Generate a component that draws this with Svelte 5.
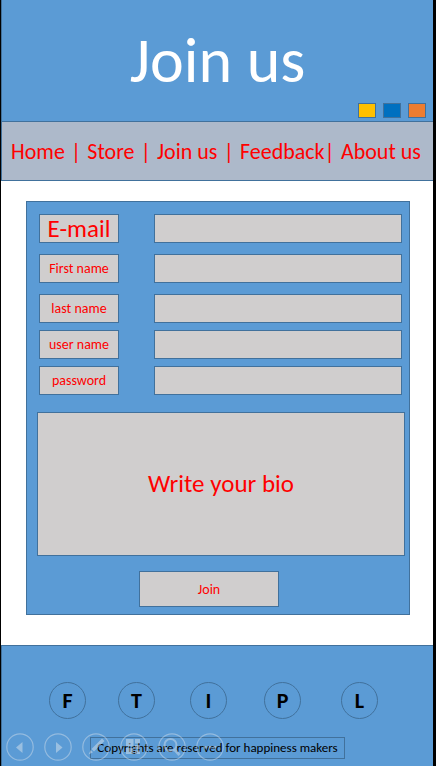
<script>
  const swatches = [
    { name: 'Yellow theme', color: '#ffc000' },
    { name: 'Blue theme', color: '#0070c0' },
    { name: 'Orange theme', color: '#ed7d31' }
  ];
  const links = ['Home', 'Store', 'Join us'];
  const fields = [
    { id: 'email', label: 'E-mail', type: 'email' },
    { id: 'first', label: 'First name', type: 'text' },
    { id: 'last', label: 'last name', type: 'text' },
    { id: 'user', label: 'user name', type: 'text' },
    { id: 'pass', label: 'password', type: 'password' }
  ];
  const socials = ['F', 'T', 'I', 'P', 'L'];
</script>

<div class="page">
  <header>
    <h1>Join us</h1>
    <div class="swatches">
      {#each swatches as s}
        <button type="button" aria-label={s.name} style:background={s.color}></button>
      {/each}
    </div>
  </header>

  <nav>
    {#each links as link}
      <a href="#top">{link}</a>
      <span>|</span>
    {/each}
    <span><a href="#top">Feedback</a>|</span>
    <a href="#top">About us</a>
  </nav>

  <main>
    <form onsubmit={(e) => e.preventDefault()}>
      <div class="fields">
        {#each fields as f}
          <div class="row">
            <label for={f.id} class:big={f.id === 'email'}>{f.label}</label>
            <input id={f.id} type={f.type} />
          </div>
        {/each}
      </div>
      <textarea aria-label="Write your bio" placeholder="Write your bio"></textarea>
      <button class="join" type="submit">Join</button>
    </form>
  </main>

  <footer>
    <div class="socials">
      {#each socials as s}
        <a href="#top">{s}</a>
      {/each}
    </div>
    <p>Copyrights are reserved for happiness makers</p>
    <div class="controls">
      <button type="button" aria-label="Previous">
        <svg viewBox="0 0 28 28"><circle cx="14" cy="14" r="13.2" /><path class="fill" d="M16.500 9v11L10 14.500z" /></svg>
      </button>
      <button type="button" aria-label="Next">
        <svg viewBox="0 0 28 28"><circle cx="14" cy="14" r="13.2" /><path class="fill" d="M12 9v11l6.500-5.500z" /></svg>
      </button>
      <button type="button" aria-label="Pen">
        <svg viewBox="0 0 28 28"><circle cx="14" cy="14" r="13.2" /><path class="fill" d="M20 5.500l2.500 2.500L12 18.500 9.500 16zM8.700 17l2.300 2.300L6.500 21.500z" /></svg>
      </button>
      <button type="button" aria-label="All slides">
        <svg viewBox="0 0 28 28"><circle cx="14" cy="14" r="13.2" /><path class="fill" d="M6 6h7.500v7.500H6zM15 6h5v4.500h-5zM15 12h5v4h-5zM6 15h7.500v6H6zM15 17.500h5V21h-5z" /></svg>
      </button>
      <button type="button" aria-label="Zoom">
        <svg viewBox="0 0 28 28"><circle cx="14" cy="14" r="13.2" /><circle class="lens" cx="12.500" cy="12" r="6" /><path class="handle" d="M16.500 16.500l5 5.500" /></svg>
      </button>
      <button type="button" aria-label="More">
        <svg viewBox="0 0 28 28"><circle cx="14" cy="14" r="13.2" /><path class="fill" d="M8 13h2.500v2.500H8zM12.800 13h2.500v2.500h-2.500zM17.500 13H20v2.500h-2.500z" /></svg>
      </button>
    </div>
  </footer>
</div>

<style>
  :global(body) {
    margin: 0;
    background: #fff;
  }
  .page {
    --edge: #41719c;
    --blue: #5b9bd5;
    --grey: #d0cece;
    box-sizing: border-box;
    display: flex;
    flex-direction: column;
    min-height: 100vh;
    border-left: 1px solid #000;
    border-right: 3px solid #000;
    font-family: Carlito, Lato, sans-serif;
    color: #f00;
  }
  .page * {
    box-sizing: border-box;
  }
  a {
    color: inherit;
    text-decoration: none;
  }
  button,
  input,
  textarea {
    margin: 0;
    padding: 0;
    font: inherit;
    color: inherit;
    border: 1px solid var(--edge);
    border-radius: 0;
    background: var(--grey);
  }
  header {
    display: flex;
    flex-direction: column;
    padding: 26px 7px 3px;
    border-left: 1px solid var(--edge);
    border-bottom: 1px solid var(--edge);
    background: var(--blue);
  }
  h1 {
    margin: 0;
    color: #fff;
    font-size: 64px;
    line-height: 68px;
    font-weight: 400;
    text-align: center;
  }
  .swatches {
    display: flex;
    justify-content: flex-end;
    gap: 7px;
    padding-top: 9px;
  }
  .swatches button {
    width: 18px;
    height: 15px;
  }
  nav {
    display: flex;
    align-items: center;
    justify-content: space-between;
    height: 59px;
    padding: 0 12px 0 9px;
    border-left: 1px solid var(--edge);
    border-bottom: 1px solid var(--edge);
    background: #adb9ca;
    font-size: 22px;
    white-space: nowrap;
  }
  main {
    padding: 20px 23px 30px 25px;
    background: #fff;
  }
  form {
    display: flex;
    flex-direction: column;
    padding: 12px 4px 7px 10px;
    border: 1px solid var(--edge);
    background: var(--blue);
  }
  .fields {
    display: flex;
    flex-direction: column;
    padding: 0 3px 0 2px;
  }
  .row {
    display: flex;
    gap: 35px;
    height: 29px;
    margin-bottom: 11px;
  }
  .row:nth-child(n + 3) {
    margin-bottom: 7px;
  }
  label {
    display: flex;
    align-items: center;
    justify-content: center;
    width: 80px;
    border: 1px solid var(--edge);
    background: var(--grey);
    font-size: 14px;
    white-space: nowrap;
  }
  .big {
    font-size: 25px;
  }
  input {
    flex: 1;
    min-width: 0;
    padding: 0 6px;
    font-size: 14px;
  }
  textarea {
    height: 144px;
    margin-top: 10px;
    padding: 56px 8px 0;
    resize: none;
    font-size: 25px;
    line-height: 30px;
    text-align: center;
  }
  textarea::placeholder {
    color: #f00;
    opacity: 1;
  }
  .join {
    align-self: center;
    width: 140px;
    height: 36px;
    margin: 15px 24px 0 0;
    font-size: 14px;
  }
  footer {
    position: relative;
    flex: 1;
    display: flex;
    flex-direction: column;
    align-items: center;
    padding: 36px 0 7px;
    border-top: 1px solid var(--edge);
    border-left: 1px solid var(--edge);
    background: var(--blue);
    color: #000;
  }
  .socials {
    display: grid;
    grid-template-columns: 69fr 72fr 74fr 77fr 37px;
    align-self: stretch;
    padding: 0 55px 0 47px;
  }
  .socials a {
    display: flex;
    align-items: center;
    justify-content: center;
    width: 37px;
    height: 37px;
    border: 1px solid var(--edge);
    border-radius: 50%;
    font-size: 22px;
    font-weight: 700;
  }
  p {
    margin: 18px 0 0;
    padding: 0 6px;
    border: 1px solid var(--edge);
    font-size: 13px;
    line-height: 20px;
    white-space: nowrap;
  }
  .controls {
    position: absolute;
    left: 4px;
    bottom: 5px;
    display: flex;
    gap: 10px;
    opacity: 0.45;
  }
  .controls button {
    width: 28px;
    height: 28px;
    border: 0;
    background: none;
  }
  svg {
    display: block;
    fill: none;
    stroke: #d9e2ec;
    stroke-width: 1.2;
  }
  .fill {
    fill: #e6ebf0;
    stroke: none;
  }
  .lens {
    stroke-width: 2;
  }
  .handle {
    stroke-width: 3;
  }
</style>
